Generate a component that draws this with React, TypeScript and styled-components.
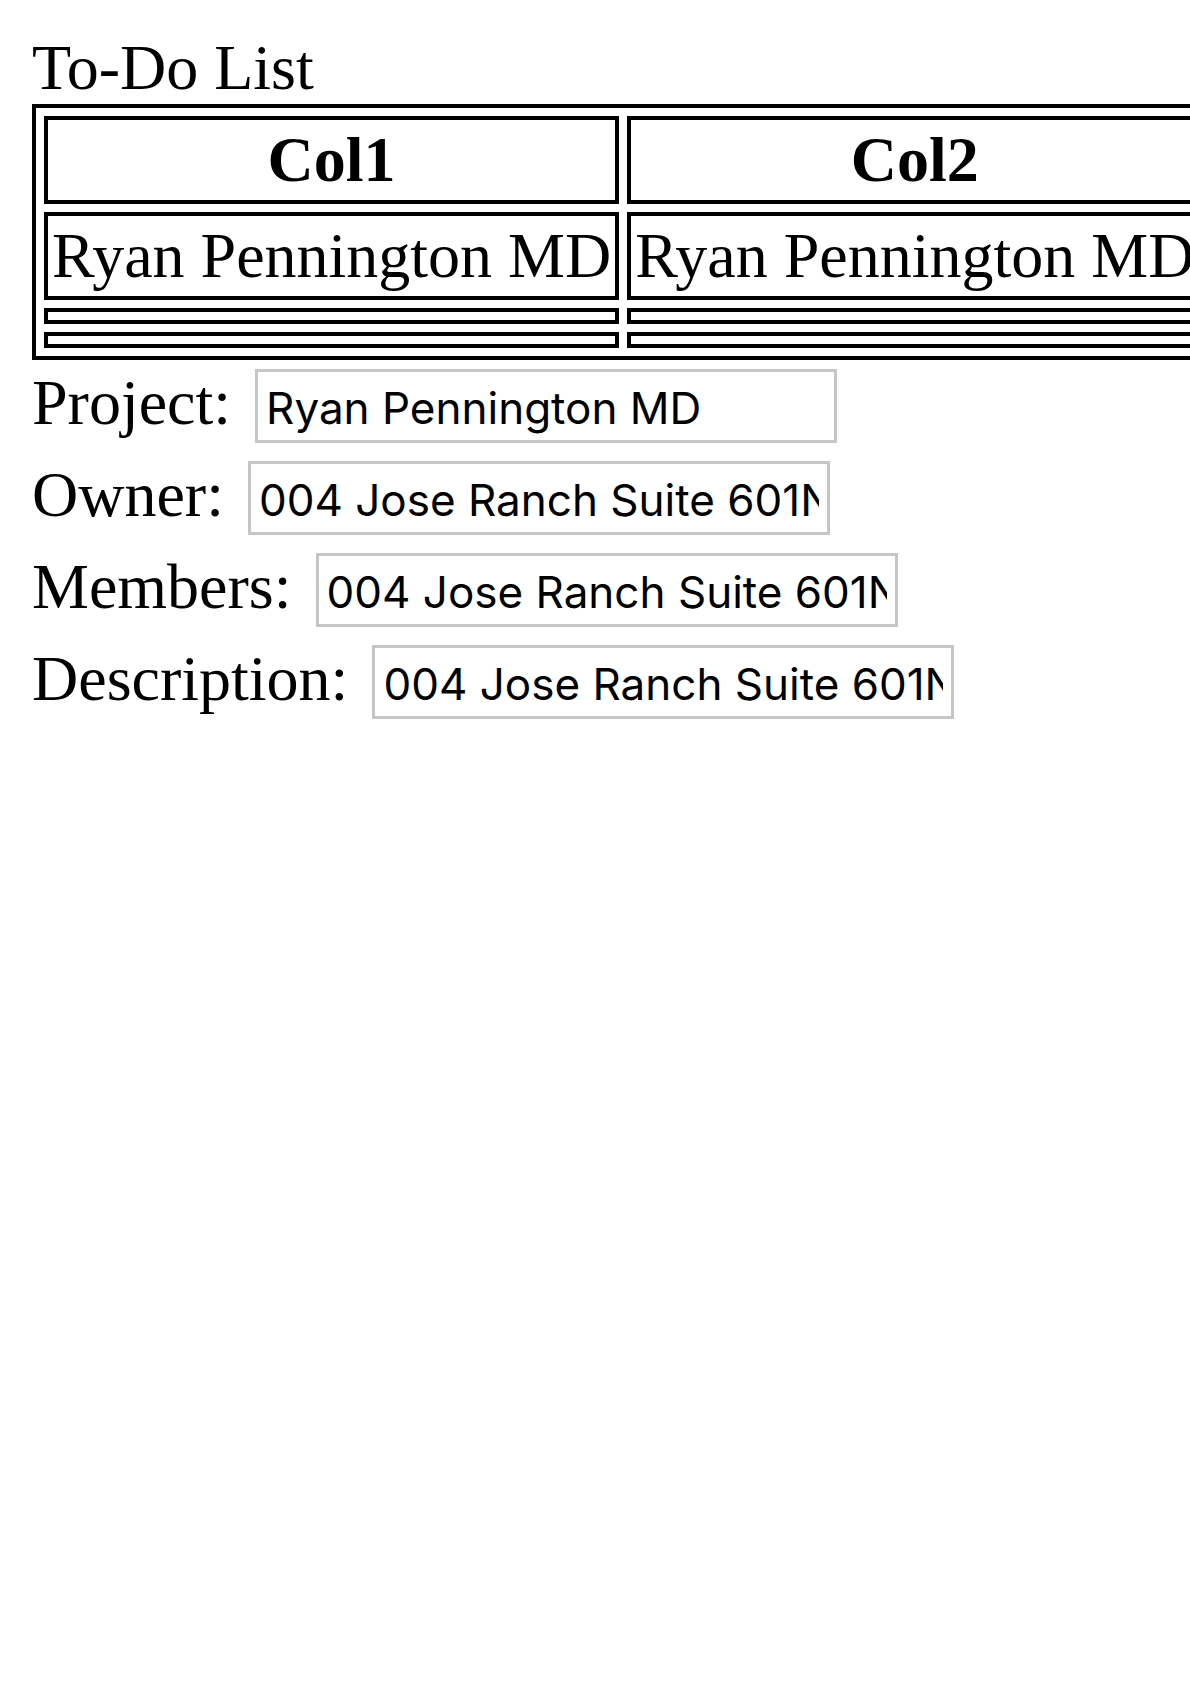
import React from "react";
import styled, { createGlobalStyle } from "styled-components";

const GlobalStyle = createGlobalStyle`
  html {
    overflow-x: hidden;
  }
  body {
    margin: 0;
    background: #ffffff;
    color: #000000;
    font-family: "Liberation Serif", "Times New Roman", serif;
  }
`;

const Page = styled.div`
  padding: 32px;
  font-size: 64px;
  line-height: 72px;
`;

const Title = styled.div`
  font-size: 64px;
  line-height: 72px;
`;

const Table = styled.table`
  border: 4px solid #000;
  border-collapse: separate;
  border-spacing: 8px;
  font-size: 64px;
  line-height: 72px;
`;

const HeadCell = styled.th`
  border: 4px solid #000;
  padding: 4px;
  font-weight: bold;
  text-align: center;
  white-space: nowrap;
`;

const Cell = styled.td`
  border: 4px solid #000;
  padding: 4px;
  white-space: nowrap;
  height: 0;
`;

const Form = styled.div`
  display: flex;
  flex-direction: column;
`;

const FieldRow = styled.div`
  display: flex;
  align-items: baseline;
  gap: 24px;
`;

const Label = styled.label`
  font-size: 64px;
  line-height: 72px;
  white-space: nowrap;
`;

const TextInput = styled.input`
  box-sizing: border-box;
  width: 582px;
  height: 74px;
  margin: 9px 0;
  padding: 4px 8px 0;
  border: 3px solid #c6c6c6;
  border-radius: 0;
  background: #fff;
  color: #000;
  font-family: Inter, "Liberation Sans", sans-serif;
  font-size: 44px;
  outline: none;
`;

const columns = ["Col1", "Col2"];
const rows: string[][] = [
  ["Ryan Pennington MD", "Ryan Pennington MD"],
  ["", ""],
  ["", ""],
];

const address = "004 Jose Ranch Suite 601North Jessica, MI 12345";

const fields = [
  { label: "Project:", value: "Ryan Pennington MD" },
  { label: "Owner:", value: address },
  { label: "Members:", value: address },
  { label: "Description:", value: address },
];

export default function App() {
  return (
    <>
      <GlobalStyle />
      <Page>
        <Title>To-Do List</Title>
        <Table>
          <thead>
            <tr>
              {columns.map((c) => (
                <HeadCell key={c}>{c}</HeadCell>
              ))}
            </tr>
          </thead>
          <tbody>
            {rows.map((r, i) => (
              <tr key={i}>
                {r.map((v, j) => (
                  <Cell key={j}>{v}</Cell>
                ))}
              </tr>
            ))}
          </tbody>
        </Table>
        <Form>
          {fields.map((f) => (
            <FieldRow key={f.label}>
              <Label>{f.label}</Label>
              <TextInput type="text" defaultValue={f.value} readOnly />
            </FieldRow>
          ))}
        </Form>
      </Page>
    </>
  );
}
